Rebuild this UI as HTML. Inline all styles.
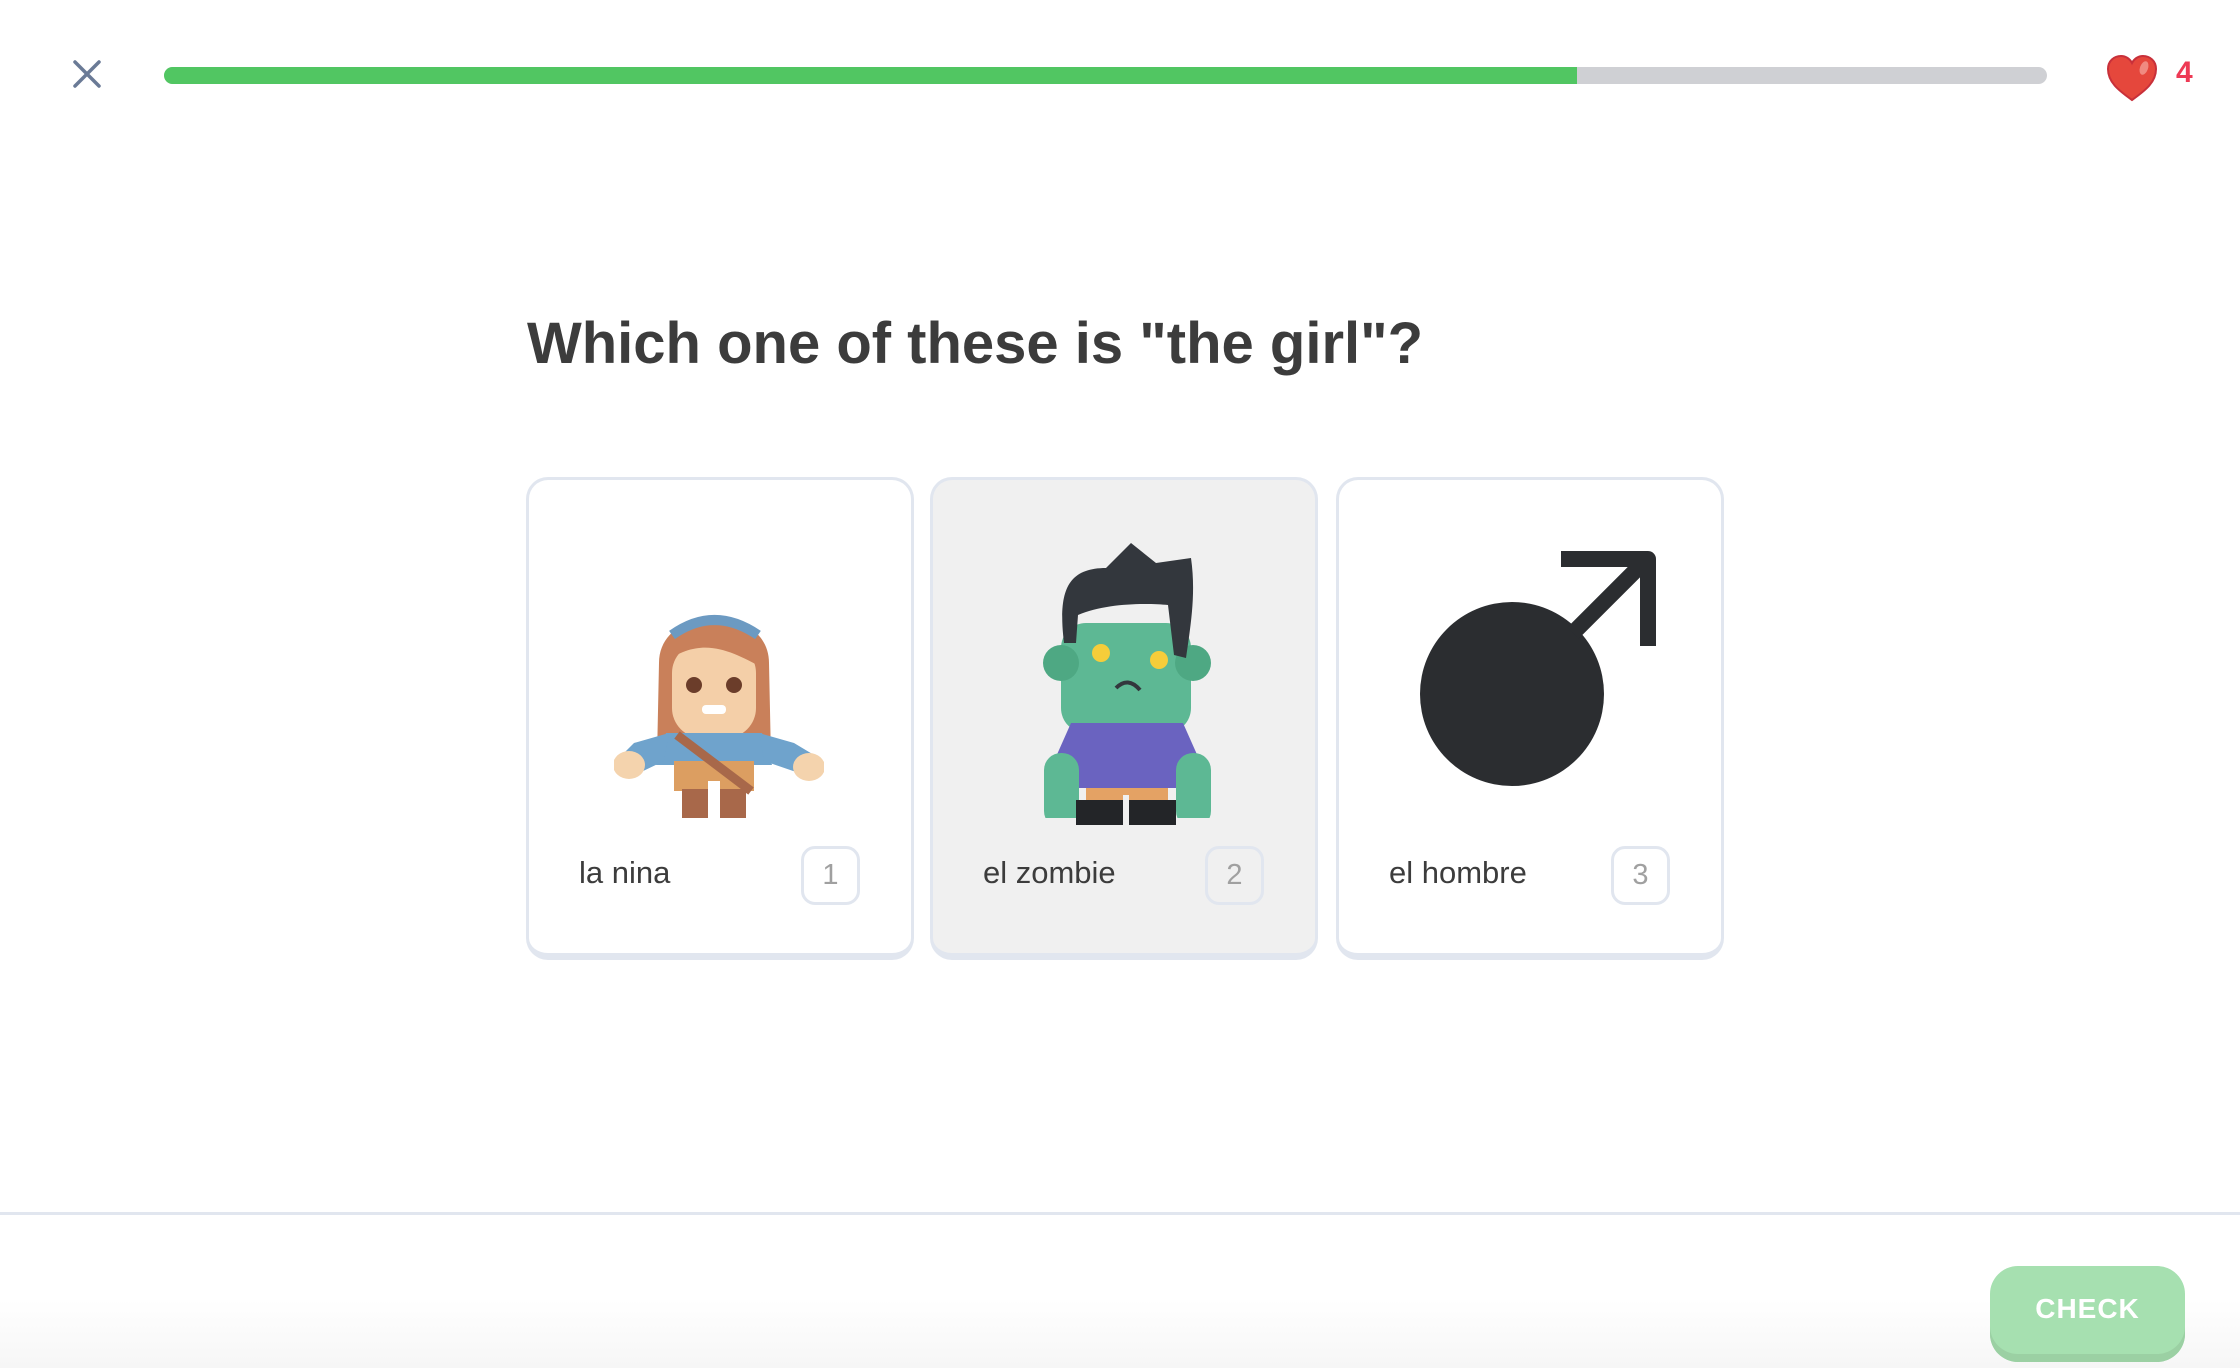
<!DOCTYPE html>
<html><head><meta charset="utf-8"><style>
*{margin:0;padding:0;box-sizing:border-box}
body{width:2240px;height:1368px;background:#fff;font-family:"Liberation Sans",sans-serif;position:relative;overflow:hidden}
.abs{position:absolute}
.bar{left:164px;top:67px;width:1883px;height:17px;border-radius:9px;background:#cfd0d4;overflow:hidden}
.bar div{width:1413px;height:100%;background:#51c662}
.q{left:527px;top:310px;font-size:58px;font-weight:bold;color:#3c3c3c;letter-spacing:0px}
.card{top:477px;width:388px;height:483px;border:3px solid #e1e6ef;border-bottom-width:7px;border-radius:22px;background:#fff}
.lbl{left:50px;top:375px;font-size:31px;color:#3c3c3c}
.num{left:272px;top:366px;width:59px;height:59px;border:3px solid #e1e6ef;border-radius:14px;color:#a0a0a0;font-size:29px;text-align:center;line-height:53px}
.foot{left:0;top:1212px;width:2240px;height:3px;background:#e1e6ef}
.btn{left:1990px;top:1266px;width:195px;height:96px;border-radius:28px;background:#a6e0b0;box-shadow:inset 0 -8px 0 #9bd0a3;color:#fff;font-weight:bold;font-size:28px;text-align:center;line-height:86px;letter-spacing:1px}
</style></head><body>
<svg class="abs" style="left:72px;top:59px" width="30" height="30" viewBox="0 0 30 30"><path d="M3 3L27 27M27 3L3 27" stroke="#6a7a96" stroke-width="3.5" stroke-linecap="round"/></svg>
<div class="abs bar"><div></div></div>
<svg class="abs" style="left:2106px;top:54px" width="52" height="48" viewBox="0 0 52 48"><path d="M26 46C12 36 2 28 2 15 2 7 8 2 15 2c5 0 9 3 11 7 2-4 6-7 11-7 7 0 13 5 13 13 0 13-10 21-24 31z" fill="#e5473c" stroke="#c8303a" stroke-width="2"/><ellipse cx="38" cy="14" rx="4" ry="7" fill="#f08a80" transform="rotate(20 38 14)"/></svg>
<div class="abs" style="left:2176px;top:56px;font-size:30px;font-weight:bold;color:#ee3a55">4</div>
<div class="abs q">Which one of these is "the girl"?</div>

<div class="abs card" style="left:526px">
<svg class="abs" style="left:85px;top:113px" width="210" height="225" viewBox="0 0 210 225">
<path d="M45 70C45 10 155 10 155 70L157 165 43 165z" fill="#c9805a"/>
<rect x="58" y="50" width="84" height="95" rx="30" fill="#f4cfa8"/>
<path d="M50 70C55 10 150 10 155 78 120 60 90 40 50 70z" fill="#c9805a"/>
<path d="M58 42Q100 12 144 42" stroke="#6c9ac2" stroke-width="10" fill="none"/>
<circle cx="80" cy="92" r="8" fill="#6b3d2a"/><circle cx="120" cy="92" r="8" fill="#6b3d2a"/>
<rect x="88" y="112" width="24" height="9" rx="4" fill="#fff"/>
<path d="M52 140h96l10 32h-116z" fill="#6fa3cc"/>
<path d="M55 140L20 150 5 165 25 180 50 168zM145 140L180 150 205 165 185 180 150 168z" fill="#6fa3cc"/>
<ellipse cx="15" cy="172" rx="16" ry="14" fill="#f4d3ad"/><ellipse cx="195" cy="174" rx="16" ry="14" fill="#f4d3ad"/>
<rect x="60" y="168" width="80" height="30" fill="#dc9e61"/>
<path d="M63 142L137 198" stroke="#a8684a" stroke-width="9"/>
<rect x="68" y="196" width="26" height="29" fill="#a8684a"/><rect x="106" y="196" width="26" height="29" fill="#a8684a"/>
<rect x="94" y="188" width="12" height="37" fill="#fff"/>
</svg>
<div class="abs lbl">la nina</div><div class="abs num">1</div></div>

<div class="abs card" style="left:930px;background:#f0f0f0">
<svg class="abs" style="left:103px;top:63px" width="182" height="275" viewBox="0 0 182 275">
<rect x="25" y="80" width="130" height="110" rx="25" fill="#5db894"/>
<circle cx="25" cy="120" r="18" fill="#4ea883"/><circle cx="157" cy="120" r="18" fill="#4ea883"/>
<path d="M28 100C22 50 30 25 70 25L95 0 120 20 155 15C160 50 155 80 150 115L138 112 132 62C110 60 70 60 42 72L40 100z" fill="#33373d"/>
<circle cx="65" cy="110" r="9" fill="#f5cd3a"/><circle cx="123" cy="117" r="9" fill="#f5cd3a"/>
<path d="M80 145Q92 133 104 147" stroke="#33373d" stroke-width="4" fill="none"/>
<path d="M35 180h112l20 45-15 10-5 10H35l-5-10-15-10z" fill="#6a63c0"/>
<rect x="8" y="210" width="35" height="75" rx="17" fill="#5db894"/><rect x="140" y="210" width="35" height="75" rx="17" fill="#5db894"/>
<rect x="50" y="245" width="82" height="25" fill="#e4a264"/>
<rect x="50" y="270" width="82" height="25" fill="#5db894"/>
</svg>
<svg class="abs" style="left:103px;top:315px" width="182" height="30"><rect x="40" y="5" width="100" height="25" fill="#232528"/><rect x="87" y="0" width="6" height="30" fill="#f0f0f0"/></svg>
<div class="abs lbl">el zombie</div><div class="abs num">2</div></div>

<div class="abs card" style="left:1336px">
<svg class="abs" style="left:0;top:0" width="388" height="340" viewBox="1336 477 388 340">
<circle cx="1509" cy="691" r="92" fill="#2b2d30"/>
<path d="M1570 630L1645 555M1558 556H1645V643" stroke="#2b2d30" stroke-width="16" fill="none" stroke-linejoin="round"/>
</svg>
<div class="abs lbl">el hombre</div><div class="abs num">3</div></div>

<div class="abs foot"></div>
<div class="abs" style="left:0;top:1300px;width:2240px;height:68px;background:linear-gradient(#fff,#f6f6f6)"></div>
<div class="abs btn">CHECK</div>
</body></html>
